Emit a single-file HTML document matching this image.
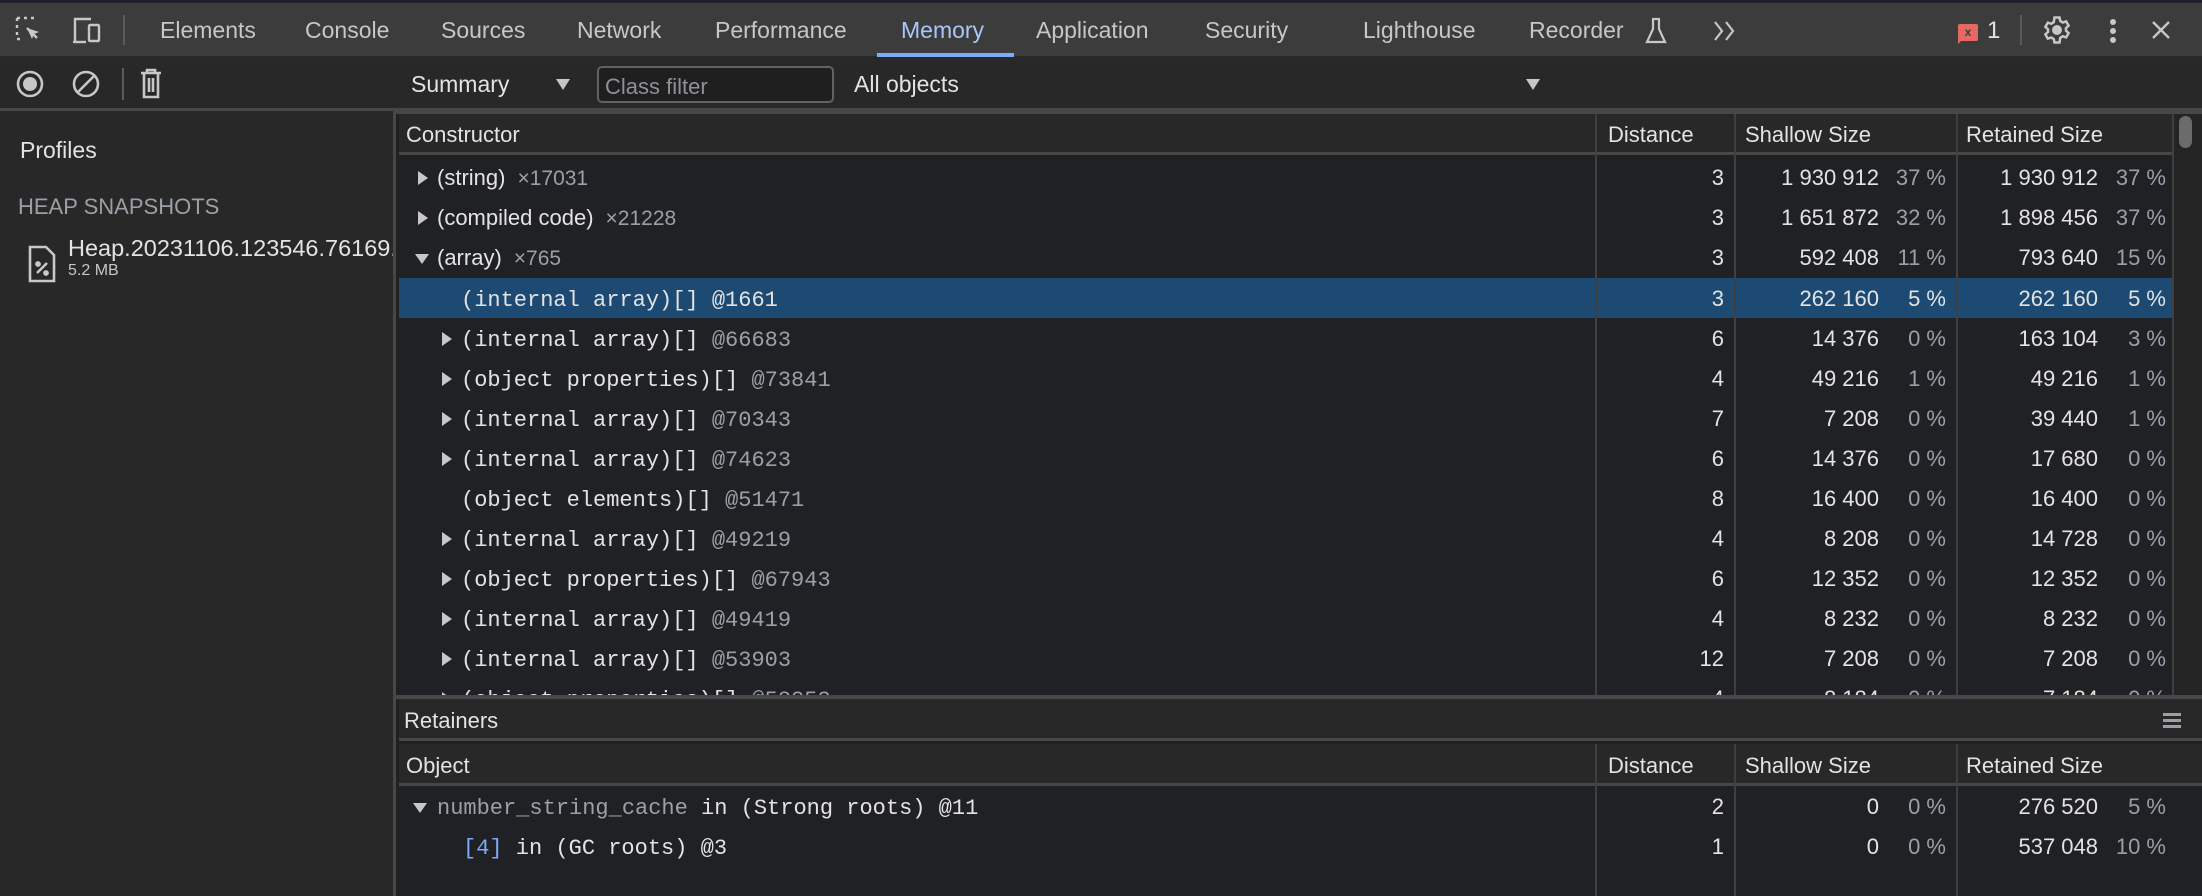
<!DOCTYPE html>
<html><head><meta charset="utf-8">
<style>
*{box-sizing:border-box;margin:0;padding:0}
body{width:2202px;height:896px;overflow:hidden;background:#202124;font-family:"Liberation Sans",Arial,sans-serif;color:#e3e3e3;position:relative}
.a{position:absolute}
#top{left:0;top:0;width:2202px;height:57px;background:#3c3c3c;border-top:3px solid #1f1f2e;border-bottom:1px solid #2a2a2a}
.tab{position:absolute;top:14px;font-size:23px;color:#c7c7c7}
#tb2{left:0;top:57px;width:2202px;height:54px;background:#282828;border-bottom:3px solid #474747}
#side{left:0;top:111px;width:396px;height:785px;background:#282828;border-right:3px solid #474747}
.hdr{background:#282828;font-size:22px;color:#e3e3e3}
.row{position:absolute;left:399px;width:1774px;height:40px;font-size:22px}
.row span{position:absolute;top:8px;white-space:nowrap}
.row span.mono{top:10px}
.mono{font-family:"Liberation Mono",monospace;font-size:22px}
.g{color:#9aa0a6}
.cnt{font-size:21px;position:static!important;margin-left:12px}
.d{right:449px}.s{right:294px}.sp{right:227px}.r{right:75px}.rp{right:7px}
.vl{position:absolute;width:2px;background:#3f3f3f}
.tri{display:inline-block;width:0;height:0;border-top:7px solid transparent;border-bottom:7px solid transparent;border-left:10px solid #c7c7c7;position:absolute;top:13px}
.row span.tri{top:14px}
.trid{display:inline-block;width:0;height:0;border-left:7px solid transparent;border-right:7px solid transparent;border-top:10px solid #c7c7c7;position:absolute}
.row span.trid{top:17px}
</style></head><body>
<div id="top" class="a">
 <svg class="a" style="left:15px;top:13px" width="30" height="30" viewBox="0 0 30 30" fill="none" stroke="#c7c7c7" stroke-width="2.4"><path d="M2 2h3M9 2h3M16 2h3M2 2v3M2 9v3M2 16v3M2 23h3"/><path d="M12 12l12 4-5 2-2 5z" fill="#c7c7c7" stroke="none"/><path d="M12 12l10 10"/></svg>
 <svg class="a" style="left:72px;top:13px" width="32" height="30" viewBox="0 0 32 30" fill="none" stroke="#c7c7c7" stroke-width="2.4"><path d="M3 25V3h16"/><path d="M1 26h13"/><rect x="17" y="9" width="10" height="16" rx="1"/></svg>
 <div class="a" style="left:123px;top:12px;width:2px;height:30px;background:#5a5a5a"></div>
 <div class="tab" style="left:160px">Elements</div>
 <div class="tab" style="left:305px">Console</div>
 <div class="tab" style="left:441px">Sources</div>
 <div class="tab" style="left:577px">Network</div>
 <div class="tab" style="left:715px">Performance</div>
 <div class="tab" style="left:901px;color:#a8c7fa">Memory</div>
 <div class="a" style="left:877px;top:50px;width:137px;height:4px;background:#7cacf8"></div>
 <div class="tab" style="left:1036px">Application</div>
 <div class="tab" style="left:1205px">Security</div>
 <div class="tab" style="left:1363px">Lighthouse</div>
 <div class="tab" style="left:1529px">Recorder</div>
 <svg class="a" style="left:1645px;top:14px" width="22" height="28" viewBox="0 0 22 28" fill="none" stroke="#c7c7c7" stroke-width="2.2"><path d="M7 2h8M8 2v10L2 25h18L14 12V2"/></svg>
 <svg class="a" style="left:1712px;top:17px" width="26" height="22" viewBox="0 0 26 22" fill="none" stroke="#c7c7c7" stroke-width="2.2"><path d="M3 2l7 9-7 9M14 2l7 9-7 9"/></svg>
 <div class="a" style="left:1958px;top:21px;width:20px;height:17px;background:#e46962;border-radius:2px;font-size:12px;color:#3c3c3c;text-align:center;line-height:17px;font-weight:bold">x</div>
 <div class="a" style="left:1958px;top:36px;width:0;height:0;border-top:5px solid #e46962;border-right:5px solid transparent"></div>
 <div class="tab" style="left:1987px;font-size:24px;color:#e3e3e3">1</div>
 <div class="a" style="left:2020px;top:12px;width:2px;height:30px;background:#5a5a5a"></div>
 <svg class="a" style="left:2042px;top:12px" width="30" height="30" viewBox="0 0 24 24" fill="none" stroke="#c7c7c7" stroke-width="2"><path d="M10 2h4l.6 2.8 2 1.2 2.7-.9 2 3.4-2.1 1.9v2.2l2.1 1.9-2 3.4-2.7-.9-2 1.2L14 22h-4l-.6-2.8-2-1.2-2.7.9-2-3.4 2.1-1.9v-2.2L2.7 9.5l2-3.4 2.7.9 2-1.2z"/><circle cx="12" cy="12" r="3" fill="#c7c7c7"/></svg>
 <div class="a" style="left:2110px;top:16px;width:6px;height:6px;border-radius:3px;background:#c7c7c7;box-shadow:0 9px 0 #c7c7c7,0 18px 0 #c7c7c7"></div>
 <svg class="a" style="left:2150px;top:16px" width="22" height="22" viewBox="0 0 22 22" stroke="#c7c7c7" stroke-width="2.4"><path d="M3 3l16 16M19 3L3 19"/></svg>
</div>
<div id="tb2" class="a">
 <svg class="a" style="left:15px;top:12px" width="30" height="30" viewBox="0 0 30 30" fill="none" stroke="#c7c7c7" stroke-width="2.6"><circle cx="15" cy="15" r="12"/><circle cx="15" cy="15" r="7" fill="#c7c7c7" stroke="none"/></svg>
 <svg class="a" style="left:71px;top:12px" width="30" height="30" viewBox="0 0 30 30" fill="none" stroke="#c7c7c7" stroke-width="2.6"><circle cx="15" cy="15" r="12"/><path d="M7 23L23 7"/></svg>
 <div class="a" style="left:122px;top:11px;width:2px;height:32px;background:#5a5a5a"></div>
 <svg class="a" style="left:139px;top:11px" width="24" height="32" viewBox="0 0 24 32" fill="none" stroke="#c7c7c7" stroke-width="2.6"><path d="M2 5h20M8 5V2h8v3M5 5v24h14V5M10 10v14M14 10v14"/></svg>
 <div class="a" style="left:411px;top:14px;font-size:23px;color:#e3e3e3">Summary</div>
 <div class="a" style="left:556px;top:22px;border-left:7px solid transparent;border-right:7px solid transparent;border-top:11px solid #c7c7c7"></div>
 <div class="a" style="left:597px;top:9px;width:237px;height:37px;border:2px solid #5f6368;border-radius:5px;background:#1f1f1f;font-size:22px;color:#8e9196;padding:6px 6px">Class filter</div>
 <div class="a" style="left:854px;top:14px;font-size:23px;color:#e3e3e3">All objects</div>
 <div class="a" style="left:1526px;top:22px;border-left:7px solid transparent;border-right:7px solid transparent;border-top:11px solid #c7c7c7"></div>
</div>
<div id="side" class="a">
 <div class="a" style="left:20px;top:26px;font-size:23px;color:#e3e3e3">Profiles</div>
 <div class="a" style="left:18px;top:83px;font-size:22px;color:#9aa0a6">HEAP SNAPSHOTS</div>
 <svg class="a" style="left:28px;top:134px" width="28" height="38" viewBox="0 0 28 38" fill="none" stroke="#c7c7c7" stroke-width="2.6"><path d="M2 2h16l8 8v26H2z"/><path d="M9 28l10-10"/><circle cx="10" cy="19" r="1.6" fill="#c7c7c7"/><circle cx="18" cy="28" r="1.6" fill="#c7c7c7"/></svg>
 <div class="a" style="left:68px;top:124px;font-size:23.5px;color:#e3e3e3;white-space:nowrap;width:325px;overflow:hidden">Heap.20231106.123546.76169.0.001.heapsnapshot</div>
 <div class="a" style="left:68px;top:151px;font-size:16px;color:#c7c7c7">5.2 MB</div>
</div>
<div class="a hdr" style="left:399px;top:114px;width:1774px;height:41px;border-bottom:3px solid #474747">
 <span class="a" style="left:7px;top:8px">Constructor</span>
 <span class="a" style="left:1209px;top:8px">Distance</span>
 <span class="a" style="left:1346px;top:8px">Shallow Size</span>
 <span class="a" style="left:1567px;top:8px">Retained Size</span>
</div>
<div class="a" style="left:396px;top:111px;width:1806px;height:3px;background:#474747"></div>
<div class="a" style="left:2173px;top:114px;width:29px;height:582px;background:#242424"></div>
<div class="a" style="left:2179px;top:116px;width:13px;height:32px;background:#6b6b6b;border-radius:7px"></div>
<div class="a" style="left:399px;top:157px;width:1774px;height:538px;overflow:hidden">
<div style="position:relative;left:-399px;top:-157px">
<div class="row" style="top:157px"><span class="tri" style="left:19px"></span><span style="left:38px">(string)<span class="g cnt">×17031</span></span><span class="d">3</span><span class="s">1 930 912</span><span class="sp g">37 %</span><span class="r">1 930 912</span><span class="rp g">37 %</span></div>
<div class="row" style="top:197px"><span class="tri" style="left:19px"></span><span style="left:38px">(compiled code)<span class="g cnt">×21228</span></span><span class="d">3</span><span class="s">1 651 872</span><span class="sp g">32 %</span><span class="r">1 898 456</span><span class="rp g">37 %</span></div>
<div class="row" style="top:237px"><span class="trid" style="left:16px"></span><span style="left:38px">(array)<span class="g cnt">×765</span></span><span class="d">3</span><span class="s">592 408</span><span class="sp g">11 %</span><span class="r">793 640</span><span class="rp g">15 %</span></div>
<div class="row" style="top:278px;background:#1c4a73"><span class="mono" style="left:62px">(internal array)[] @1661</span><span class="d">3</span><span class="s">262 160</span><span class="sp">5 %</span><span class="r">262 160</span><span class="rp">5 %</span></div>
<div class="row" style="top:318px"><span class="tri" style="left:43px"></span><span class="mono" style="left:62px">(internal array)[] <span class="g" style="position:static">@66683</span></span><span class="d">6</span><span class="s">14 376</span><span class="sp g">0 %</span><span class="r">163 104</span><span class="rp g">3 %</span></div>
<div class="row" style="top:358px"><span class="tri" style="left:43px"></span><span class="mono" style="left:62px">(object properties)[] <span class="g" style="position:static">@73841</span></span><span class="d">4</span><span class="s">49 216</span><span class="sp g">1 %</span><span class="r">49 216</span><span class="rp g">1 %</span></div>
<div class="row" style="top:398px"><span class="tri" style="left:43px"></span><span class="mono" style="left:62px">(internal array)[] <span class="g" style="position:static">@70343</span></span><span class="d">7</span><span class="s">7 208</span><span class="sp g">0 %</span><span class="r">39 440</span><span class="rp g">1 %</span></div>
<div class="row" style="top:438px"><span class="tri" style="left:43px"></span><span class="mono" style="left:62px">(internal array)[] <span class="g" style="position:static">@74623</span></span><span class="d">6</span><span class="s">14 376</span><span class="sp g">0 %</span><span class="r">17 680</span><span class="rp g">0 %</span></div>
<div class="row" style="top:478px"><span class="mono" style="left:62px">(object elements)[] <span class="g" style="position:static">@51471</span></span><span class="d">8</span><span class="s">16 400</span><span class="sp g">0 %</span><span class="r">16 400</span><span class="rp g">0 %</span></div>
<div class="row" style="top:518px"><span class="tri" style="left:43px"></span><span class="mono" style="left:62px">(internal array)[] <span class="g" style="position:static">@49219</span></span><span class="d">4</span><span class="s">8 208</span><span class="sp g">0 %</span><span class="r">14 728</span><span class="rp g">0 %</span></div>
<div class="row" style="top:558px"><span class="tri" style="left:43px"></span><span class="mono" style="left:62px">(object properties)[] <span class="g" style="position:static">@67943</span></span><span class="d">6</span><span class="s">12 352</span><span class="sp g">0 %</span><span class="r">12 352</span><span class="rp g">0 %</span></div>
<div class="row" style="top:598px"><span class="tri" style="left:43px"></span><span class="mono" style="left:62px">(internal array)[] <span class="g" style="position:static">@49419</span></span><span class="d">4</span><span class="s">8 232</span><span class="sp g">0 %</span><span class="r">8 232</span><span class="rp g">0 %</span></div>
<div class="row" style="top:638px"><span class="tri" style="left:43px"></span><span class="mono" style="left:62px">(internal array)[] <span class="g" style="position:static">@53903</span></span><span class="d">12</span><span class="s">7 208</span><span class="sp g">0 %</span><span class="r">7 208</span><span class="rp g">0 %</span></div>
<div class="row" style="top:678px"><span class="tri" style="left:43px"></span><span class="mono" style="left:62px">(object properties)[] <span class="g" style="position:static">@58353</span></span><span class="d">4</span><span class="s">8 184</span><span class="sp g">0 %</span><span class="r">7 184</span><span class="rp g">0 %</span></div>
</div></div>
<div class="vl" style="left:1595px;top:114px;height:582px"></div>
<div class="vl" style="left:1734px;top:114px;height:582px"></div>
<div class="vl" style="left:1956px;top:114px;height:582px"></div>
<div class="vl" style="left:2172px;top:114px;height:582px"></div>
<div class="a" style="left:396px;top:695px;width:1806px;height:4px;background:#474747"></div>
<div class="a hdr" style="left:399px;top:699px;width:1803px;height:42px;border-bottom:3px solid #474747">
 <span class="a" style="left:5px;top:9px">Retainers</span>
 <div class="a" style="left:1764px;top:14px;width:18px;height:3px;background:#9aa0a6;box-shadow:0 6px 0 #9aa0a6,0 12px 0 #9aa0a6"></div>
</div>
<div class="a hdr" style="left:399px;top:744px;width:1803px;height:42px;border-bottom:3px solid #474747">
 <span class="a" style="left:7px;top:9px">Object</span>
 <span class="a" style="left:1209px;top:9px">Distance</span>
 <span class="a" style="left:1346px;top:9px">Shallow Size</span>
 <span class="a" style="left:1567px;top:9px">Retained Size</span>
</div>
<div class="row" style="top:786px"><span class="trid" style="left:14px"></span><span class="mono" style="left:38px"><span class="g" style="position:static">number_string_cache</span> in (Strong roots) @11</span><span class="d">2</span><span class="s">0</span><span class="sp g">0 %</span><span class="r">276 520</span><span class="rp g">5 %</span></div>
<div class="row" style="top:826px"><span class="mono" style="left:64px"><span style="position:static;color:#7cacf8">[4]</span> in (GC roots) @3</span><span class="d">1</span><span class="s">0</span><span class="sp g">0 %</span><span class="r">537 048</span><span class="rp g">10 %</span></div>
<div class="vl" style="left:1595px;top:744px;height:152px"></div>
<div class="vl" style="left:1734px;top:744px;height:152px"></div>
<div class="vl" style="left:1956px;top:744px;height:152px"></div>
</body></html>
